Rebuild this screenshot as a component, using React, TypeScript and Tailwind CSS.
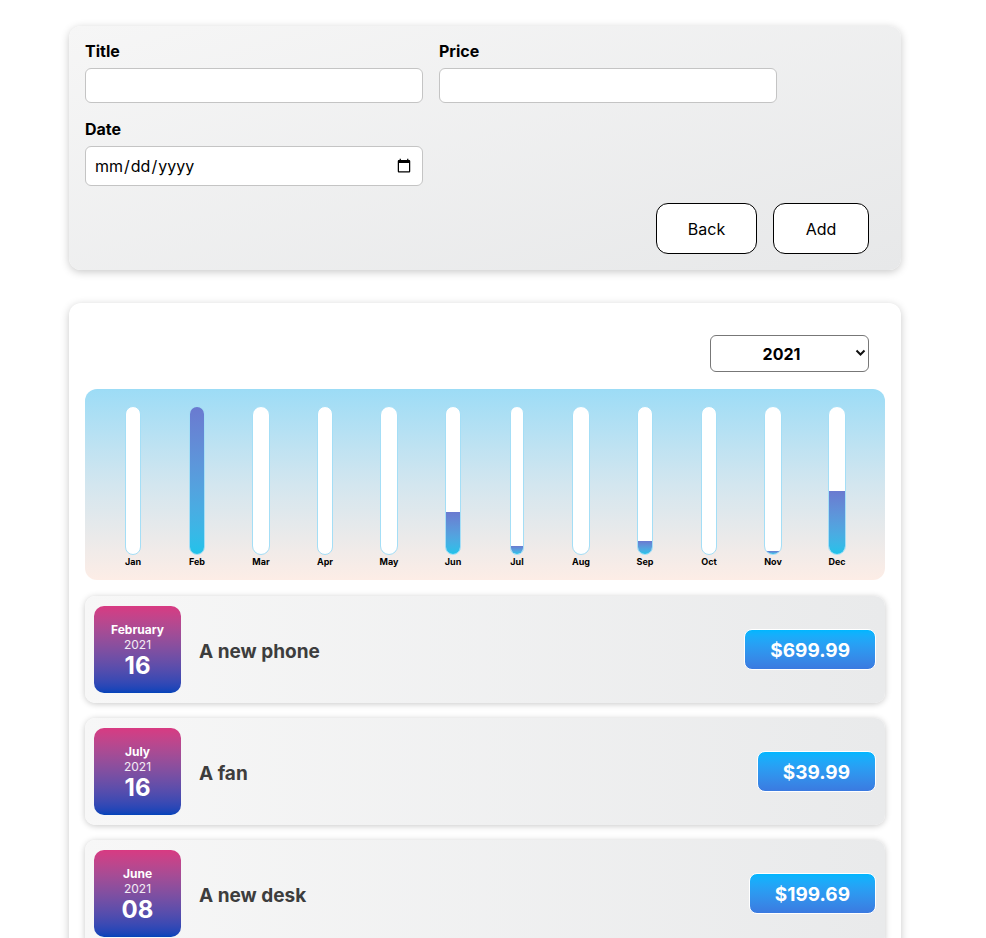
import React from "react";

const months = [
  { m: "Jan", v: 0 },
  { m: "Feb", v: 699.99 },
  { m: "Mar", v: 0 },
  { m: "Apr", v: 0 },
  { m: "May", v: 0 },
  { m: "Jun", v: 199.69 },
  { m: "Jul", v: 39.99 },
  { m: "Aug", v: 0 },
  { m: "Sep", v: 60 },
  { m: "Oct", v: 0 },
  { m: "Nov", v: 14 },
  { m: "Dec", v: 298 },
];

const expenses = [
  { month: "February", year: "2021", day: "16", title: "A new phone", price: "$699.99" },
  { month: "July", year: "2021", day: "16", title: "A fan", price: "$39.99" },
  { month: "June", year: "2021", day: "08", title: "A new desk", price: "$199.69" },
];

export default function App() {
  const max = Math.max(...months.map((x) => x.v));
  return (
    <div className="min-h-screen bg-white pb-10" style={{ fontFamily: "Inter, 'Noto Sans', sans-serif" }}>
      {/* Form card */}
      <div className="ml-[69px] mt-[26px] w-[832px] rounded-xl bg-gradient-to-br from-[#f6f6f6] to-[#e7e8e9] p-4 shadow-[0_2px_8px_rgba(0,0,0,0.22)]">
        <div className="flex flex-wrap gap-x-4 gap-y-[17px]">
          <div className="flex w-[338px] flex-col">
            <label className="mb-[7px] text-[16px] font-bold leading-[19px] text-black">Title</label>
            <input type="text" className="h-[35px] rounded-md border border-[#c4c4c4] bg-white px-2 outline-none" />
          </div>
          <div className="flex w-[338px] flex-col">
            <label className="mb-[7px] text-[16px] font-bold leading-[19px] text-black">Price</label>
            <input type="text" className="h-[35px] rounded-md border border-[#c4c4c4] bg-white px-2 outline-none" />
          </div>
          <div className="flex w-[338px] flex-col">
            <label className="mb-[7px] text-[16px] font-bold leading-[19px] text-black">Date</label>
            <input type="date" className="h-[40px] rounded-md border border-[#c4c4c4] bg-white px-2 text-[16px] text-black outline-none" />
          </div>
        </div>
        <div className="mt-[17px] flex justify-end gap-4 pr-4">
          <button className="h-[51px] w-[101px] rounded-xl border border-black bg-white text-[16px] text-black">Back</button>
          <button className="h-[51px] w-[96px] rounded-xl border border-black bg-white text-[16px] text-black">Add</button>
        </div>
      </div>

      {/* Expenses card */}
      <div className="ml-[69px] mt-[33px] w-[832px] rounded-xl bg-white p-4 shadow-[0_2px_8px_rgba(0,0,0,0.22)]">
        <div className="flex justify-end pr-4 pt-4">
          <div className="relative h-[37px] w-[159px]">
            <select
              defaultValue="2021"
              className="h-full w-full appearance-none rounded-md border border-[#777] bg-white pr-4 text-center text-[16px] font-bold text-black outline-none"
            >
              <option value="2019">2019</option>
              <option value="2020">2020</option>
              <option value="2021">2021</option>
              <option value="2022">2022</option>
            </select>
            <svg className="pointer-events-none absolute right-[3px] top-[14px]" width="11" height="8" viewBox="0 0 11 8">
              <path d="M1.5 1.5 L5.5 5.5 L9.5 1.5" stroke="#111" strokeWidth="2" fill="none" />
            </svg>
          </div>
        </div>

        {/* Chart */}
        <div className="mt-[17px] grid h-[191px] grid-cols-12 rounded-xl bg-gradient-to-b from-[#9cdcf6] via-[#d3e6ef] to-[#fdede6] px-4 pb-[14px] pt-[17px]">
          {months.map((mo) => {
            const pct = max > 0 ? (mo.v / max) * 100 : 0;
            return (
              <div key={mo.m} className="flex justify-center">
                <div className="flex flex-col items-stretch">
                  <div className="flex h-[149px] flex-col justify-end overflow-hidden rounded-full border border-[#a4def6] bg-white">
                    <div
                      className="w-full bg-gradient-to-b from-[#6a7ad0] to-[#1fc2ea]"
                      style={{ height: `${pct}%` }}
                    />
                  </div>
                  <span className="mt-[1px] text-center text-[9px] font-bold leading-[11px] text-black">{mo.m}</span>
                </div>
              </div>
            );
          })}
        </div>

        {/* List */}
        <div className="mt-4 flex flex-col gap-[15px]">
          {expenses.map((e) => (
            <div
              key={e.title}
              className="flex items-center rounded-[10px] bg-gradient-to-r from-[#f7f7f7] to-[#e9eaeb] px-[9px] py-[10px] shadow-[0_1px_6px_rgba(0,0,0,0.22)]"
            >
              <div className="flex h-[87px] w-[87px] flex-col items-center justify-center rounded-[10px] bg-gradient-to-b from-[#d83a82] to-[#0243ba] pt-[2px] text-white">
                <span className="text-[12px] font-bold leading-[15px]">{e.month}</span>
                <span className="text-[12px] leading-[15px] text-white/90">{e.year}</span>
                <span className="text-[24px] font-bold leading-[27px]">{e.day}</span>
              </div>
              <div className="ml-[18px] flex-1 pt-[5px] text-[19px] font-bold text-[#3d3d3d]">{e.title}</div>
              <div className="rounded-lg border border-white bg-gradient-to-b from-[#00b6ff] to-[#3b7ae0] px-[25px] pb-[7px] pt-[9px] text-[19px] font-bold leading-[23px] text-white">
                {e.price}
              </div>
            </div>
          ))}
        </div>
      </div>
    </div>
  );
}
